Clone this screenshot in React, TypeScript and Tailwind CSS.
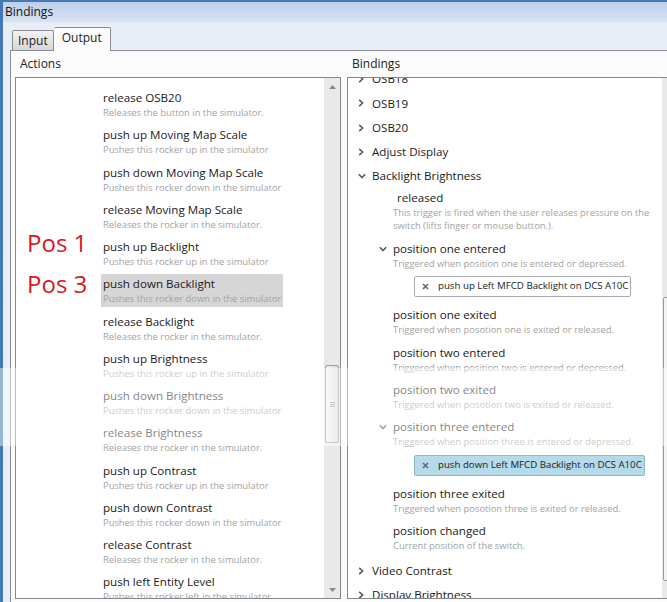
import type { ReactNode } from "react";

type Action = { title: string; desc: string; label?: string; labelShift?: string; selected?: boolean };

const UP = "Pushes this rocker up in the simulator";
const DOWN = "Pushes this rocker down in the simulator";
const REL = "Releases the rocker in the simulator.";

const actions: Action[] = [
  { title: "release OSB20", desc: "Releases the button in the simulator." },
  { title: "push up Moving Map Scale", desc: UP },
  { title: "push down Moving Map Scale", desc: DOWN },
  { title: "release Moving Map Scale", desc: REL },
  { title: "push up Backlight", desc: UP, label: "Pos 1", labelShift: "-mt-[4px]" },
  { title: "push down Backlight", desc: DOWN, label: "Pos 3", selected: true },
  { title: "release Backlight", desc: REL },
  { title: "push up Brightness", desc: UP },
  { title: "push down Brightness", desc: DOWN },
  { title: "release Brightness", desc: REL },
  { title: "push up Contrast", desc: UP },
  { title: "push down Contrast", desc: DOWN },
  { title: "release Contrast", desc: REL },
  { title: "push left Entity Level", desc: "Pushes this rocker left in the simulator" },
];

function ChevronRight() {
  return (
    <svg width="6" height="8" viewBox="0 0 6 8" className="shrink-0">
      <path d="M1.2 0.8 L4.6 4 L1.2 7.2" fill="none" stroke="#5a5a5a" strokeWidth="1.6" />
    </svg>
  );
}

function ChevronDown() {
  return (
    <svg width="8" height="6" viewBox="0 0 8 6" className="shrink-0">
      <path d="M0.8 1.2 L4 4.6 L7.2 1.2" fill="none" stroke="#5a5a5a" strokeWidth="1.6" />
    </svg>
  );
}

function Arrow({ down }: { down?: boolean }) {
  return (
    <div className="flex h-[17px] items-center justify-center">
      <svg width="7" height="4" viewBox="0 0 7 4">
        <path d={down ? "M0 0 L7 0 L3.5 4 Z" : "M0 4 L7 4 L3.5 0 Z"} fill="#8a8a8a" />
      </svg>
    </div>
  );
}

function ScrollBar({ offset, thumb }: { offset: string; thumb: string }) {
  return (
    <div className="flex w-[17px] shrink-0 flex-col border-l border-white bg-[#e9e9e9]">
      <Arrow />
      <div className={offset} />
      <div
        className={`${thumb} mx-[1px] flex items-center justify-center rounded-[2px] border border-[#9a9a9a] bg-gradient-to-r from-[#f6f6f6] to-[#dcdcdc]`}
      >
        <div className="flex flex-col gap-[1px]">
          <div className="h-px w-[5px] bg-[#9a9a9a]" />
          <div className="h-px w-[5px] bg-[#9a9a9a]" />
          <div className="h-px w-[5px] bg-[#9a9a9a]" />
        </div>
      </div>
      <div className="flex-1" />
      <Arrow down />
    </div>
  );
}

function ActionRow({ action }: { action: Action }) {
  return (
    <div className="flex h-[37.25px] items-start">
      <div
        className={`w-[85px] shrink-0 pl-[11px] pt-[2px] text-[24px] leading-[16px] text-[#d8181e] ${action.labelShift ?? ""}`}
      >
        {action.label}
      </div>
      <div className={`w-fit px-[2px] py-[2px] ${action.selected ? "bg-[#d6d6d6]" : ""}`}>
        <div className="whitespace-nowrap text-[11.6px] leading-[16px] text-[#1a1a1a]">{action.title}</div>
        <div className="whitespace-nowrap text-[9.4px] leading-[13px] text-[#a3a3a3]">{action.desc}</div>
      </div>
    </div>
  );
}

function TreeRow({ open, children }: { open?: boolean; children: ReactNode }) {
  return (
    <div className="flex h-[24.3px] items-center pl-[10px]">
      <div className="w-[14px]">{open ? <ChevronDown /> : <ChevronRight />}</div>
      <span className="whitespace-nowrap text-[11.6px] text-[#1a1a1a]">{children}</span>
    </div>
  );
}

function Trigger({
  title,
  desc,
  open,
  indent = "",
}: {
  title: string;
  desc: string[];
  open?: boolean;
  indent?: string;
}) {
  return (
    <div className="flex pb-[6.3px] pl-[31px] pt-[2px]">
      <div className="flex h-[16px] w-[14px] items-center">{open && <ChevronDown />}</div>
      <div>
        <div className={`whitespace-nowrap text-[11.6px] leading-[16px] text-[#1a1a1a] ${indent}`}>{title}</div>
        {desc.map((d) => (
          <div key={d} className="whitespace-nowrap text-[9.4px] leading-[13px] text-[#a3a3a3]">
            {d}
          </div>
        ))}
      </div>
    </div>
  );
}

function Binding({ text, selected }: { text: string; selected?: boolean }) {
  return (
    <div className="pb-[8.5px] pl-[66px]">
      <div
        className={`flex h-[21px] w-fit items-center gap-[9px] rounded-[2px] border pl-[7px] pr-[2px] text-[9.7px] text-[#1a1a1a] ${
          selected ? "border-[#8fb6ca] bg-[#b5dae9]" : "border-[#a9abb0] bg-white"
        }`}
      >
        <svg width="7" height="7" viewBox="0 0 7 7" className="shrink-0">
          <path d="M1 1 L6 6 M6 1 L1 6" stroke="#6b6b6b" strokeWidth="1.7" />
        </svg>
        <span className="whitespace-nowrap">{text}</span>
      </div>
    </div>
  );
}

export default function App() {
  return (
    <div className="relative h-[602px] w-[667px] overflow-hidden bg-[#4679b4] pl-[3px] pt-[2px] font-['Open_Sans',sans-serif]">
      <div className="flex h-full flex-col bg-[#e8eef6]">
        <div className="flex h-[20px] items-center bg-gradient-to-b from-[#bdd0ea] to-[#d8e3f2] pl-[2px] text-[12px] text-[#111]">
          Bindings
        </div>

        <div className="flex h-[28px] items-end pl-[9px]">
          <div className="flex h-[20px] items-center rounded-t-[2px] border border-b-0 border-[#8c8e94] bg-gradient-to-b from-[#f3f3f3] to-[#d6d6d6] px-[5px] text-[12px] text-[#222]">
            Input
          </div>
          <div className="relative -mb-px flex h-[24px] items-center rounded-t-[2px] border border-b-0 border-l-0 border-[#8c8e94] bg-[#fbfbfb] px-[8px] pb-[3px] text-[12px] text-[#222]">
            Output
          </div>
        </div>

        <div className="ml-[7px] flex flex-1 gap-[6px] border-l border-t border-[#8c8e94] bg-[#fbfbfb] pl-[4px] pt-[5px]">
          <div className="flex w-[326px] shrink-0 flex-col">
            <div className="mb-[5px] pl-[5px] text-[12px] leading-[16px] text-[#222]">Actions</div>
            <div className="flex h-[522px] border border-[#828790] bg-white">
              <div className="flex-1 overflow-hidden pt-[10px]">
                {actions.map((a) => (
                  <ActionRow key={a.title} action={a} />
                ))}
              </div>
              <ScrollBar offset="h-[270px]" thumb="h-[78px]" />
            </div>
          </div>

          <div className="flex w-[332px] shrink-0 flex-col">
            <div className="mb-[5px] pl-[5px] text-[12px] leading-[16px] text-[#222]">Bindings</div>
            <div className="flex h-[522px] border border-[#828790] bg-white">
              <div className="flex-1 overflow-hidden">
                <div className="-mt-[11.2px]">
                  <TreeRow>OSB18</TreeRow>
                  <TreeRow>OSB19</TreeRow>
                  <TreeRow>OSB20</TreeRow>
                  <TreeRow>Adjust Display</TreeRow>
                  <TreeRow open>Backlight Brightness</TreeRow>
                  <Trigger
                    title="released"
                    indent="pl-[4px]"
                    desc={[
                      "This trigger is fired when the user releases pressure on the",
                      "switch (lifts finger or mouse button.).",
                    ]}
                  />
                  <Trigger open title="position one entered" desc={["Triggered when position one is entered or depressed."]} />
                  <Binding text="push up Left MFCD Backlight on DCS A10C" />
                  <Trigger title="position one exited" desc={["Triggered when posotion one is exited or released."]} />
                  <Trigger title="position two entered" desc={["Triggered when position two is entered or depressed."]} />
                  <Trigger title="position two exited" desc={["Triggered when posotion two is exited or released."]} />
                  <Trigger
                    open
                    title="position three entered"
                    desc={["Triggered when position three is entered or depressed."]}
                  />
                  <Binding selected text="push down Left MFCD Backlight on DCS A10C" />
                  <Trigger title="position three exited" desc={["Triggered when posotion three is exited or released."]} />
                  <Trigger title="position changed" desc={["Current position of the switch."]} />
                  <TreeRow>Video Contrast</TreeRow>
                  <TreeRow>Display Brightness</TreeRow>
                </div>
              </div>
              <ScrollBar offset="h-[205px]" thumb="h-[287px]" />
            </div>
          </div>
        </div>
      </div>

      {/* faded watermark band that washes out the middle of the shot */}
      <div className="pointer-events-none absolute left-0 right-0 top-[368px] h-[78px] bg-white/45" />
    </div>
  );
}
